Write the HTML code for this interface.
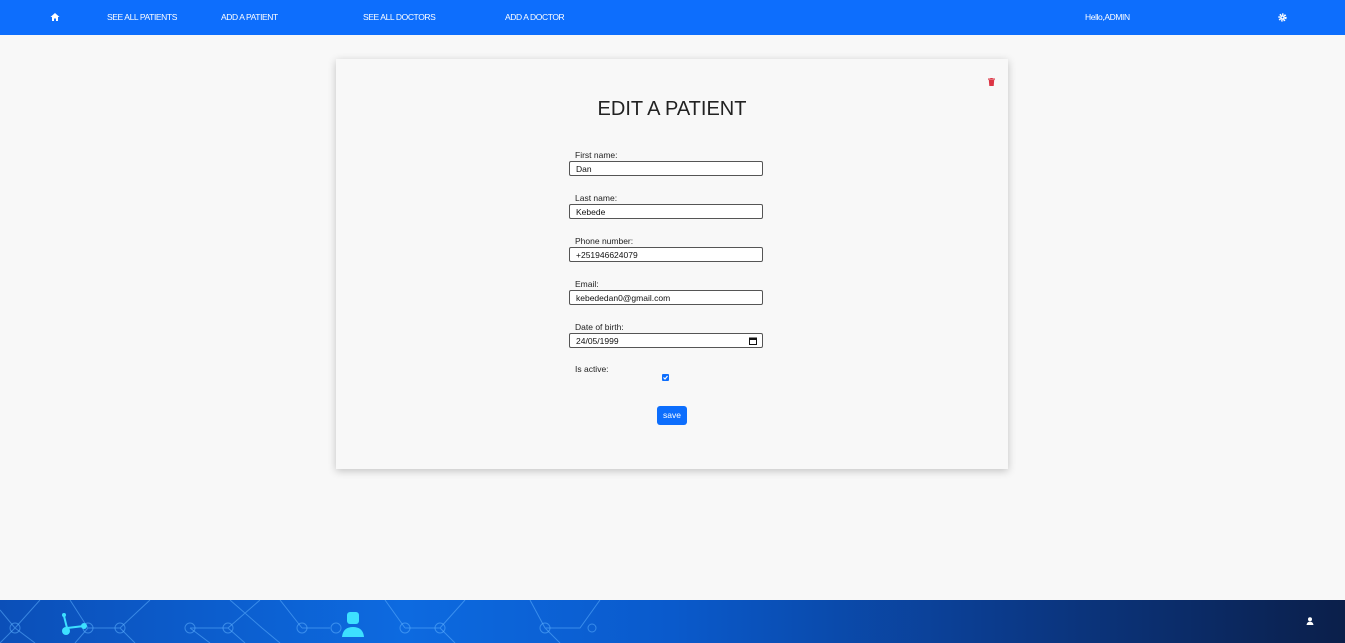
<!DOCTYPE html>
<html><head><meta charset="utf-8"><style>
*{box-sizing:border-box;margin:0;padding:0}
body{width:1345px;height:643px;background:#f8f8f8;font-family:"Liberation Sans",sans-serif;position:relative;overflow:hidden}
.nav{position:absolute;top:0;left:0;width:1345px;height:35px;background:#0d6efd;color:#fff;font-size:8.5px}
.nav span{position:absolute;top:12px;letter-spacing:-0.4px}
.card{position:absolute;left:336px;top:59px;width:672px;height:410px;background:#f8f8f8;box-shadow:0 2px 8px rgba(0,0,0,0.22)}
h1{position:absolute;top:39px;left:0;width:100%;text-align:center;font-size:20px;font-weight:normal;color:#222}
.lbl{position:absolute;left:239px;font-size:8.5px;color:#222}
.inp{position:absolute;left:233px;width:194px;height:15px;border:1px solid #555;border-radius:2px;background:#fff;font-size:8.5px;padding:2px 0 0 6px;color:#111}
.btn{position:absolute;left:321px;top:347px;width:30px;height:19px;background:#0d6efd;border-radius:3px;color:#fff;font-size:8.5px;text-align:center;line-height:19px}
.foot{position:absolute;left:0;top:600px;width:1345px;height:43px;background:linear-gradient(90deg,#0b4fb8 0%,#0d6ae0 30%,#0a5acc 50%,#0b3a8a 75%,#0b1f4a 100%)}
</style></head><body>
<div class="nav">
<svg style="position:absolute;left:50px;top:12px" width="10" height="10" viewBox="0 0 10 10"><path d="M5 1 L0.5 5 H2 V9 H4 V6.5 H6 V9 H8 V5 H9.5 Z" fill="#fff"/></svg>
<span style="left:107px">SEE ALL PATIENTS</span>
<span style="left:221px">ADD A PATIENT</span>
<span style="left:363px">SEE ALL DOCTORS</span>
<span style="left:505px">ADD A DOCTOR</span>
<span style="left:1085px">Hello,ADMIN</span>
<svg style="position:absolute;left:1278px;top:13px" width="9" height="9" viewBox="0 0 10 10"><circle cx="5" cy="5" r="3.5" fill="none" stroke="#fff" stroke-width="2.2" stroke-dasharray="1.6 1"/><circle cx="5" cy="5" r="2.5" fill="#fff"/><circle cx="5" cy="5" r="1" fill="#0d6efd"/></svg>
</div>
<div class="card">
<svg style="position:absolute;left:652px;top:19px" width="7" height="8" viewBox="0 0 7 8"><rect x="0" y="0.5" width="7" height="1.2" fill="#dc3545"/><rect x="2.3" y="0" width="2.4" height="1" fill="#dc3545"/><path d="M0.8 2 H6.2 L5.7 8 H1.3 Z" fill="#dc3545"/></svg>
<h1>EDIT A PATIENT</h1>
<div class="lbl" style="top:91px">First name:</div><div class="inp" style="top:102px">Dan</div>
<div class="lbl" style="top:134px">Last name:</div><div class="inp" style="top:145px">Kebede</div>
<div class="lbl" style="top:177px">Phone number:</div><div class="inp" style="top:188px">+251946624079</div>
<div class="lbl" style="top:220px">Email:</div><div class="inp" style="top:231px">kebededan0@gmail.com</div>
<div class="lbl" style="top:263px">Date of birth:</div><div class="inp" style="top:274px">24/05/1999<svg style="position:absolute;right:5px;top:3px" width="8" height="8" viewBox="0 0 8 8"><rect x="0.5" y="1" width="7" height="6.5" fill="none" stroke="#111"/><rect x="0.5" y="1" width="7" height="2" fill="#111"/></svg></div>
<div class="lbl" style="top:305px">Is active:</div>
<div style="position:absolute;left:326px;top:315px;width:7px;height:7px;background:#0d6efd;border-radius:1px"><svg width="7" height="7" viewBox="0 0 7 7" style="position:absolute;top:0;left:0"><path d="M1.5 3.5 L3 5 L5.5 2" stroke="#fff" stroke-width="1.2" fill="none"/></svg></div>
<div class="btn">save</div>
</div>
<div class="foot">
<svg width="1345" height="43" style="position:absolute;left:0;top:0"><g stroke="#5fb0ff" stroke-opacity="0.55" fill="none" stroke-width="1">
<path d="M0 10 L15 28 L0 43 M15 28 L40 0 M15 28 L35 43 M88 28 L120 28 L150 0 M120 28 L135 43 M88 28 L70 0 M88 28 L75 43 M190 28 L228 28 L260 0 M228 28 L245 43 M190 28 L210 43 M230 0 L262 28 L280 43 M302 28 L330 28 M302 28 L280 0 M405 28 L440 28 L465 0 M440 28 L455 43 M405 28 L385 0 M545 28 L580 28 L600 0 M545 28 L530 0 M545 28 L560 43"/>
<circle cx="15" cy="28" r="5"/><circle cx="88" cy="28" r="5"/><circle cx="120" cy="28" r="5"/><circle cx="190" cy="28" r="5"/><circle cx="228" cy="28" r="5"/><circle cx="302" cy="28" r="5"/><circle cx="336" cy="28" r="5"/><circle cx="405" cy="28" r="5"/><circle cx="440" cy="28" r="5"/><circle cx="545" cy="28" r="5"/><circle cx="592" cy="28" r="4"/></g>
<g fill="#3de0ff"><circle cx="66" cy="31" r="4"/><circle cx="84" cy="26" r="3"/><circle cx="64" cy="15" r="2"/><path d="M64 16 L67 28 L84 26" stroke="#3de0ff" stroke-width="2" fill="none"/>
<rect x="347" y="12" width="12" height="12" rx="3"/><path d="M342 37 Q343 27 353 27 Q363 27 364 37 Z"/></g></svg>
<svg style="position:absolute;left:1306px;top:17px" width="8" height="8" viewBox="0 0 8 8"><circle cx="4" cy="2.2" r="2" fill="#fff"/><path d="M0.5 8 Q1 4.6 4 4.6 Q7 4.6 7.5 8 Z" fill="#fff"/></svg>
</div>
</body></html>
